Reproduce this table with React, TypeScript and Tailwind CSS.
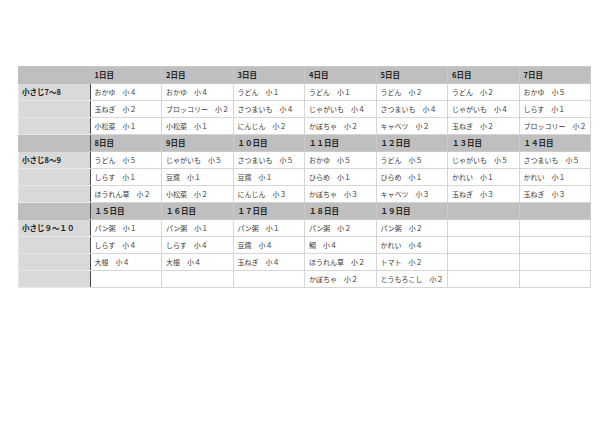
import React from "react";

type Block = {
  label: string;
  headers: string[];
  cols: string[][];
  rows: number;
};

const blocks: Block[] = [
  {
    label: "小さじ7～8",
    headers: ["1日目", "2日目", "3日目", "4日目", "5日目", "6日目", "7日目"],
    rows: 3,
    cols: [
      ["おかゆ　小４", "玉ねぎ　小２", "小松菜　小１"],
      ["おかゆ　小４", "ブロッコリー　小２", "小松菜　小１"],
      ["うどん　小１", "さつまいも　小４", "にんじん　小２"],
      ["うどん　小１", "じゃがいも　小４", "かぼちゃ　小２"],
      ["うどん　小２", "さつまいも　小４", "キャベツ　小２"],
      ["うどん　小２", "じゃがいも　小４", "玉ねぎ　小２"],
      ["おかゆ　小５", "しらす　小１", "ブロッコリー　小２"],
    ],
  },
  {
    label: "小さじ8～9",
    headers: ["8日目", "9日目", "１０日目", "１１日目", "１２日目", "１３日目", "１４日目"],
    rows: 3,
    cols: [
      ["うどん　小５", "しらす　小１", "ほうれん草　小２"],
      ["じゃがいも　小５", "豆腐　小１", "小松菜　小２"],
      ["さつまいも　小５", "豆腐　小１", "にんじん　小３"],
      ["おかゆ　小５", "ひらめ　小１", "かぼちゃ　小３"],
      ["うどん　小５", "ひらめ　小１", "キャベツ　小３"],
      ["じゃがいも　小５", "かれい　小１", "玉ねぎ　小３"],
      ["さつまいも　小５", "かれい　小１", "玉ねぎ　小３"],
    ],
  },
  {
    label: "小さじ９～１０",
    headers: ["１５日目", "１６日目", "１７日目", "１８日目", "１９日目", "", ""],
    rows: 4,
    cols: [
      ["パン粥　小１", "しらす　小４", "大根　小４", ""],
      ["パン粥　小１", "しらす　小４", "大根　小４", ""],
      ["パン粥　小１", "豆腐　小４", "玉ねぎ　小４", ""],
      ["パン粥　小２", "鯛　小４", "ほうれん草　小２", "かぼちゃ　小２"],
      ["パン粥　小２", "かれい　小４", "トマト　小２", "とうもろこし　小２"],
      ["", "", "", ""],
      ["", "", "", ""],
    ],
  },
];

export default function App() {
  return (
    <div
      className="w-[607px] h-[428px] bg-white pt-[66px] pl-[18px]"
      style={{ fontFamily: '"Noto Sans CJK JP", "Noto Sans", sans-serif' }}
    >
      <table className="table-fixed border-collapse w-[572px] text-[7px] leading-none">
        <colgroup>
          {Array.from({ length: 8 }).map((_, i) => (
            <col key={i} className="w-[71.5px]" />
          ))}
        </colgroup>
        <tbody>
          {blocks.map((b, bi) => (
            <React.Fragment key={bi}>
              <tr className="h-[17px] bg-[#bfbfbf]">
                <td
                  className={
                    bi === 0
                      ? "border border-[#bfbfbf] p-0"
                      : "border border-[#bfbfbf] border-r-[#4a4a4a] p-0"
                  }
                ></td>
                {b.headers.map((h, i) => (
                  <td
                    key={i}
                    className="border border-[#cacaca] pl-[4px] text-[7.5px] font-bold text-[#222] whitespace-nowrap overflow-hidden"
                  >
                    {h}
                  </td>
                ))}
              </tr>
              {Array.from({ length: b.rows }).map((_, ri) => (
                <tr key={ri} className="h-[17px]">
                  <td className="bg-[#d9d9d9] border border-[#e8e8e8] border-r-[#4a4a4a] pl-[3px] text-[7.5px] font-bold text-[#222] whitespace-nowrap overflow-hidden">
                    {ri === 0 ? b.label : ""}
                  </td>
                  {b.cols.map((c, ci) => (
                    <td
                      key={ci}
                      className="bg-white border border-[#d6d6d6] pl-[4px] text-[#3a3a3a] whitespace-nowrap overflow-hidden"
                    >
                      {c[ri]}
                    </td>
                  ))}
                </tr>
              ))}
            </React.Fragment>
          ))}
        </tbody>
      </table>
    </div>
  );
}
